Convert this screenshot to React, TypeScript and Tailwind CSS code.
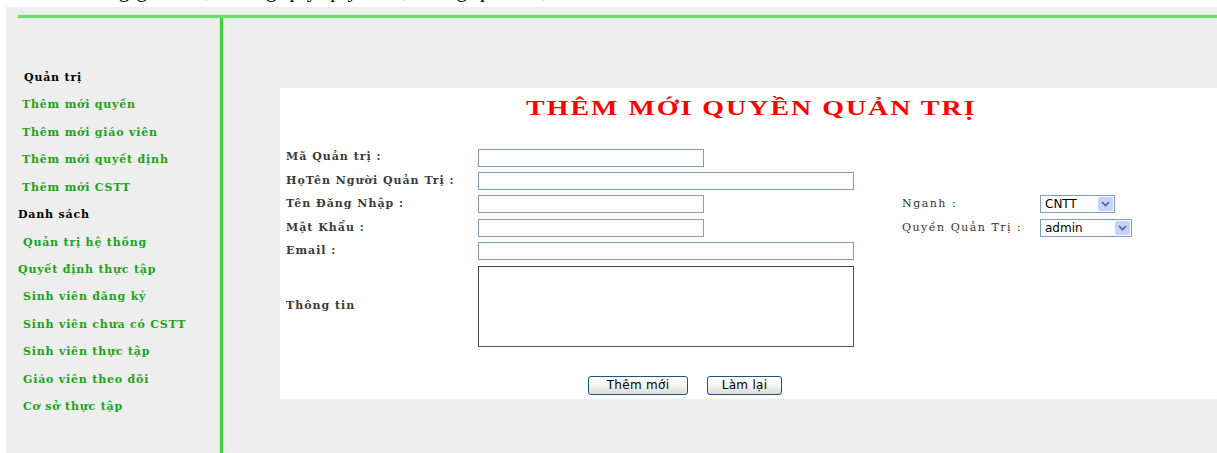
import React from "react";

const serif = "font-['DejaVu_Serif','Liberation_Serif',serif]";

const menu = [
  { label: "Quản trị", head: true, pad: "pl-[18px]" },
  { label: "Thêm mới quyền", pad: "pl-[16px]" },
  { label: "Thêm mới giáo viên", pad: "pl-[16px]" },
  { label: "Thêm mới quyết định", pad: "pl-[16px]" },
  { label: "Thêm mới CSTT", pad: "pl-[16px]" },
  { label: "Danh sách", head: true, pad: "pl-[12px]" },
  { label: "Quản trị hệ thống", pad: "pl-[17px]" },
  { label: "Quyết định thực tập", pad: "pl-[12px]" },
  { label: "Sinh viên đăng ký", pad: "pl-[17px]" },
  { label: "Sinh viên chưa có CSTT", pad: "pl-[17px]" },
  { label: "Sinh viên thực tập", pad: "pl-[17px]" },
  { label: "Giáo viên theo dõi", pad: "pl-[17px]" },
  { label: "Cơ sở thực tập", pad: "pl-[17px]" },
];

const labelCls = `${serif} text-[11px] font-bold tracking-[1px] text-[#3a3a3a]`;

function TextBox({ wide }: { wide?: boolean }) {
  return (
    <div
      className={`h-[18px] border border-[#7f9db9] bg-white ${wide ? "w-[376px]" : "w-[226px]"}`}
    />
  );
}

function Select({ value, width }: { value: string; width: string }) {
  return (
    <div className={`flex h-[18px] items-stretch border border-[#7f9db9] bg-white ${width}`}>
      <span className="flex flex-1 items-center pl-[4px] font-['DejaVu_Sans',sans-serif] text-[12px] leading-none text-black">
        {value}
      </span>
      <span className="m-[1px] flex w-[15px] items-center justify-center rounded-[2px] bg-[#c3d3fd]">
        <svg width="9" height="6" viewBox="0 0 9 6">
          <path d="M1 1 L4.5 4.5 L8 1" fill="none" stroke="#4d6185" strokeWidth="1.6" />
        </svg>
      </span>
    </div>
  );
}

function XpButton({ children, width }: { children: React.ReactNode; width: string }) {
  return (
    <button
      className={`h-[19px] ${width} rounded-[3px] border border-[#1c5180] bg-gradient-to-b from-white via-[#f4f4f0] to-[#dcdcd4] font-['DejaVu_Sans',sans-serif] text-[12px] leading-none tracking-[0.3px] text-black`}
    >
      {children}
    </button>
  );
}

function Row({ label, children, right }: { label: string; children: React.ReactNode; right?: React.ReactNode }) {
  return (
    <div className="flex h-[23.4px] items-center">
      <div className={`w-[192px] ${labelCls}`}>{label}</div>
      <div className="w-[424px]">{children}</div>
      {right}
    </div>
  );
}

function RightField({ label, children }: { label: string; children: React.ReactNode }) {
  return (
    <>
      <div className={`w-[138px] ${serif} text-[11px] tracking-[1.5px] text-[#333]`}>{label}</div>
      {children}
    </>
  );
}

export default function App() {
  return (
    <div className="flex h-[453px] w-[1217px] flex-col overflow-hidden bg-white">
      {/* caption line of the page above, cut off */}
      <div className="h-[7px] overflow-hidden">
        <div className="-mt-[22px] pl-[30px] font-['Liberation_Serif',serif] text-[21px] leading-[24px] tracking-[1px] text-black">
          Chức năng giao diện trang quy quyền hệ thống quản trị
        </div>
      </div>

      <div className="ml-[6px] flex flex-1 flex-col bg-[#eeeeee]">
        <div className="ml-[12px] mt-[8px] h-[3px] bg-[#6fdc6f] shadow-[0_0_2px_#a6eca6]" />

        <div className="flex flex-1">
          <nav className="flex w-[214px] flex-col pt-[46.5px]">
            {menu.map((m) => (
              <div
                key={m.label}
                className={`flex h-[27.45px] items-center ${m.pad} ${serif} text-[11px] font-bold tracking-[0.8px] ${
                  m.head ? "text-black" : "text-[#1aa31a]"
                }`}
              >
                {m.label}
              </div>
            ))}
          </nav>

          <div className="w-[3px] bg-[#3fcf3f] shadow-[0_0_2px_#9be89b]" />

          <main className="flex-1 pl-[57px] pt-[70px]">
            <div className="flex flex-col bg-white pb-[4px] pl-[6px]">
              <div className="flex h-[40px] items-center justify-center">
                <h1 className="scale-x-[1.33] font-['Liberation_Serif',serif] text-[21px] font-bold leading-none tracking-[1.5px] text-[#ff0000]">
                  THÊM MỚI QUYỀN QUẢN TRỊ
                </h1>
              </div>

              <div className="mt-[18px] flex flex-col">
                <Row label="Mã Quản trị :">
                  <TextBox />
                </Row>
                <Row label="HọTên Người Quản Trị :">
                  <TextBox wide />
                </Row>
                <Row
                  label="Tên Đăng Nhập :"
                  right={
                    <RightField label="Nganh :">
                      <Select value="CNTT" width="w-[75px]" />
                    </RightField>
                  }
                >
                  <TextBox />
                </Row>
                <Row
                  label="Mật Khẩu :"
                  right={
                    <RightField label="Quyền Quản Trị :">
                      <Select value="admin" width="w-[92px]" />
                    </RightField>
                  }
                >
                  <TextBox />
                </Row>
                <Row label="Email :">
                  <TextBox wide />
                </Row>

                <div className="mt-[3px] flex items-center">
                  <div className={`w-[192px] ${labelCls}`}>Thông tin</div>
                  <div className="h-[81px] w-[376px] border border-[#555] border-t-[#444] border-l-[#444] bg-white" />
                </div>
              </div>

              <div className="mt-[29px] flex gap-[19px] pl-[302px]">
                <XpButton width="w-[100px]">Thêm mới</XpButton>
                <XpButton width="w-[75px]">Làm lại</XpButton>
              </div>
            </div>
          </main>
        </div>
      </div>
    </div>
  );
}
